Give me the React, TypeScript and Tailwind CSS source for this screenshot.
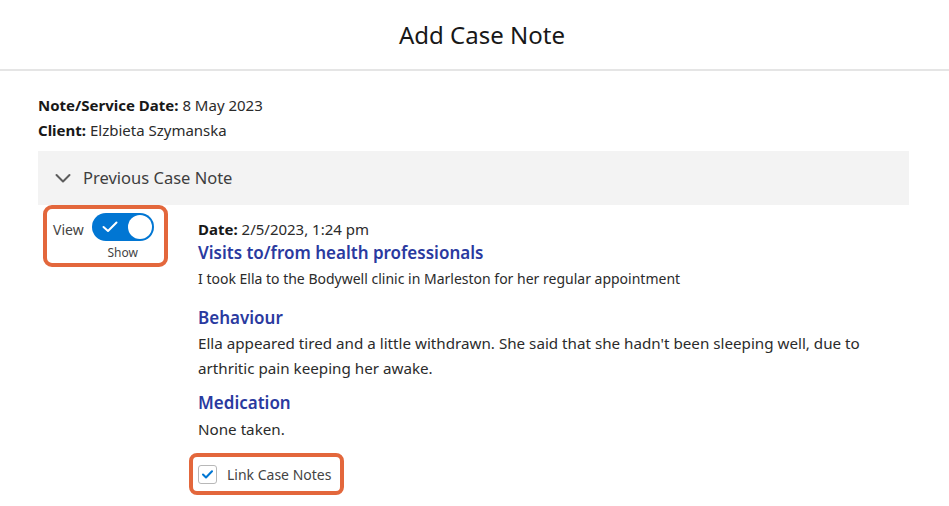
import React from "react";

const FONT = { fontFamily: '"Noto Sans", "Open Sans", Arial, sans-serif' };

function Chevron() {
  return (
    <svg width="18" height="18" viewBox="0 0 18 18" fill="none" className="shrink-0">
      <path d="M2.5 6 L9 12.5 L15.5 6" stroke="#5c5c5c" strokeWidth="2" strokeLinecap="round" strokeLinejoin="round" />
    </svg>
  );
}

function Toggle() {
  return (
    <div className="flex flex-col items-center">
      <div className="w-[62px] h-[28px] rounded-full bg-[#0176d3] flex items-center justify-between pl-[10px] pr-[2px]">
        <svg width="16" height="12" viewBox="0 0 16 12" fill="none">
          <path d="M1.5 6 L6 10 L14.5 1.5" stroke="#fff" strokeWidth="2" strokeLinecap="round" strokeLinejoin="round" />
        </svg>
        <div className="w-[24px] h-[24px] rounded-full bg-white" />
      </div>
      <span className="text-[12px] leading-[14px] text-[#444] mt-[5px]">Show</span>
    </div>
  );
}

function Heading({ children, className = "" }: { children: React.ReactNode; className?: string }) {
  return <h3 className={`text-[17px] leading-[24px] font-semibold text-[#2a3a9f] ${className}`}>{children}</h3>;
}

export default function App() {
  return (
    <div className="w-[949px] h-[506px] bg-white overflow-hidden" style={FONT}>
      <header className="h-[71px] border-b-2 border-[#e5e5e5] flex items-center justify-center pl-[15px]">
        <h1 className="text-[24px] text-[#181818] mt-[1px]">Add Case Note</h1>
      </header>

      <div className="pl-[38px] pr-[40px] pt-[22px]">
        <div className="text-[15px] leading-[25px] text-[#2b2b2b]">
          <p>
            <span className="font-bold text-[#181818]">Note/Service Date:</span> 8 May 2023
          </p>
          <p>
            <span className="font-bold text-[#181818]">Client:</span> Elzbieta Szymanska
          </p>
        </div>

        <div className="mt-[8px] h-[54px] bg-[#f3f3f3] flex items-center gap-[11px] pl-[16px]">
          <Chevron />
          <span className="text-[16.5px] text-[#3e3e3e]">Previous Case Note</span>
        </div>

        <div className="flex">
          <div className="w-[160px] shrink-0">
            <div className="ml-[5px] w-[125px] h-[62px] rounded-[9px] border-[4px] border-[#e3673c] flex items-start pl-[6px] pt-[4px] gap-[8px]">
              <span className="text-[14px] text-[#444] mt-[6px]">View</span>
              <Toggle />
            </div>
          </div>

          <div className="pt-[13px]">
            <p className="text-[15px] leading-[22px] text-[#2b2b2b]">
              <span className="font-bold text-[#181818]">Date:</span> 2/5/2023, 1:24 pm
            </p>
            <Heading className="mt-[1px]">Visits to/from health professionals</Heading>
            <p className="text-[14px] leading-[25px] text-[#2b2b2b] mt-[1px]">
              I took Ella to the Bodywell clinic in Marleston for her regular appointment
            </p>

            <Heading className="mt-[15px]">Behaviour</Heading>
            <p className="text-[15.2px] leading-[25px] text-[#2b2b2b] mt-[1px]">
              Ella appeared tired and a little withdrawn. She said that she hadn't been sleeping well, due to
              <br />
              arthritic pain keeping her awake.
            </p>

            <Heading className="mt-[10px]">Medication</Heading>
            <p className="text-[15.2px] leading-[25px] text-[#2b2b2b] mt-[2px]">None taken.</p>

            <div className="-ml-[9px] mt-[11px] w-[155px] h-[42px] rounded-[8px] border-[4px] border-[#e3673c] flex items-center gap-[10px] pl-[5px]">
              <div className="w-[19px] h-[19px] rounded-[3px] border border-[#b8b8b8] bg-white flex items-center justify-center">
                <svg width="11" height="9" viewBox="0 0 11 9" fill="none">
                  <path d="M1 4.5 L4 7.5 L10 1.2" stroke="#0176d3" strokeWidth="2" strokeLinecap="round" strokeLinejoin="round" />
                </svg>
              </div>
              <span className="text-[14px] text-[#444]">Link Case Notes</span>
            </div>
          </div>
        </div>
      </div>
    </div>
  );
}
